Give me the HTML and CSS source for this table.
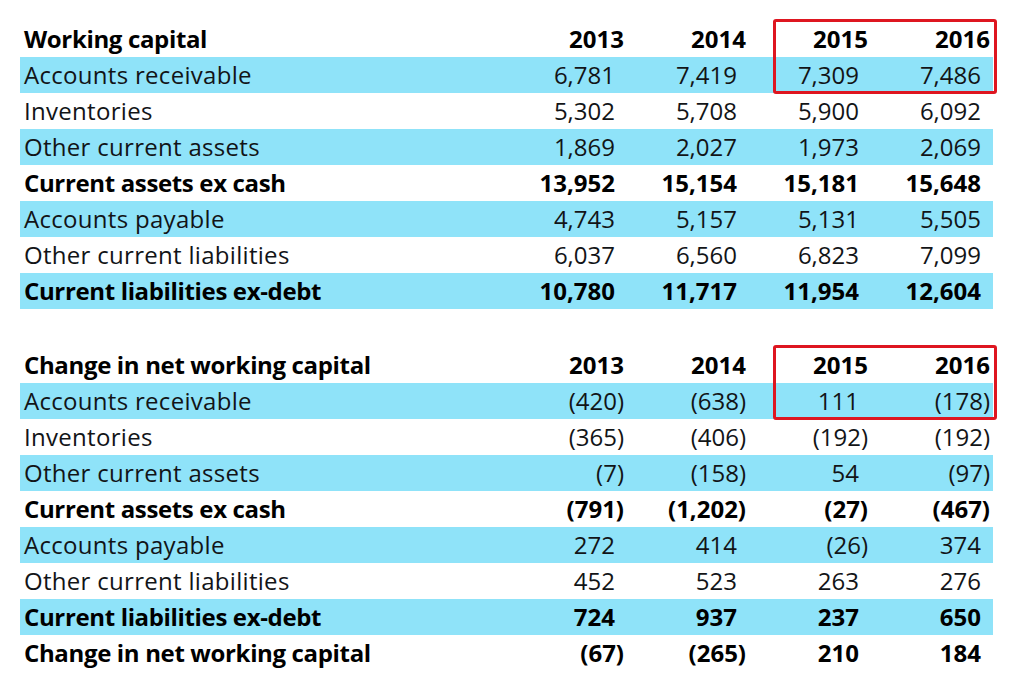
FILE: index.html
```html
<!DOCTYPE html>
<html>
<head>
<meta charset="utf-8">
<link rel="stylesheet" href="styles.css">
</head>
<body>
<div class="page">
  <section class="block">
    <div class="row head"><div class="lbl">Working capital</div><div class="c">2013</div><div class="c">2014</div><div class="c">2015</div><div class="c">2016</div></div>
    <div class="row blue"><div class="lbl">Accounts receivable</div><div class="c p">6,781</div><div class="c p">7,419</div><div class="c p">7,309</div><div class="c p">7,486</div></div>
    <div class="row"><div class="lbl">Inventories</div><div class="c p">5,302</div><div class="c p">5,708</div><div class="c p">5,900</div><div class="c p">6,092</div></div>
    <div class="row blue"><div class="lbl">Other current assets</div><div class="c p">1,869</div><div class="c p">2,027</div><div class="c p">1,973</div><div class="c p">2,069</div></div>
    <div class="row bold"><div class="lbl">Current assets ex cash</div><div class="c p">13,952</div><div class="c p">15,154</div><div class="c p">15,181</div><div class="c p">15,648</div></div>
    <div class="row blue"><div class="lbl">Accounts payable</div><div class="c p">4,743</div><div class="c p">5,157</div><div class="c p">5,131</div><div class="c p">5,505</div></div>
    <div class="row"><div class="lbl">Other current liabilities</div><div class="c p">6,037</div><div class="c p">6,560</div><div class="c p">6,823</div><div class="c p">7,099</div></div>
    <div class="row blue bold"><div class="lbl">Current liabilities ex-debt</div><div class="c p">10,780</div><div class="c p">11,717</div><div class="c p">11,954</div><div class="c p">12,604</div></div>
    <div class="highlight"></div>
  </section>

  <section class="block second">
    <div class="row head"><div class="lbl">Change in net working capital</div><div class="c">2013</div><div class="c">2014</div><div class="c">2015</div><div class="c">2016</div></div>
    <div class="row blue"><div class="lbl">Accounts receivable</div><div class="c">(420)</div><div class="c">(638)</div><div class="c p">111</div><div class="c">(178)</div></div>
    <div class="row"><div class="lbl">Inventories</div><div class="c">(365)</div><div class="c">(406)</div><div class="c">(192)</div><div class="c">(192)</div></div>
    <div class="row blue"><div class="lbl">Other current assets</div><div class="c">(7)</div><div class="c">(158)</div><div class="c p">54</div><div class="c">(97)</div></div>
    <div class="row bold"><div class="lbl">Current assets ex cash</div><div class="c">(791)</div><div class="c">(1,202)</div><div class="c">(27)</div><div class="c">(467)</div></div>
    <div class="row blue"><div class="lbl">Accounts payable</div><div class="c p">272</div><div class="c p">414</div><div class="c">(26)</div><div class="c p">374</div></div>
    <div class="row"><div class="lbl">Other current liabilities</div><div class="c p">452</div><div class="c p">523</div><div class="c p">263</div><div class="c p">276</div></div>
    <div class="row blue bold"><div class="lbl">Current liabilities ex-debt</div><div class="c p">724</div><div class="c p">937</div><div class="c p">237</div><div class="c p">650</div></div>
    <div class="row bold"><div class="lbl">Change in net working capital</div><div class="c">(67)</div><div class="c">(265)</div><div class="c p">210</div><div class="c p">184</div></div>
    <div class="highlight"></div>
  </section>
</div>
</body>
</html>
```
FILE: styles.css
```css
html, body {
  margin: 0;
  padding: 0;
  background: #ffffff;
}
body {
  font-family: "Open Sans", "Noto Sans", "Liberation Sans", sans-serif;
  color: #121417;
}
.page {
  padding: 21px 0 0 20px;
  width: 973px;
}
.block {
  position: relative;
}
.second {
  margin-top: 38px;
}
.row {
  display: grid;
  grid-template-columns: 485px repeat(4, 122px);
  height: 36px;
  line-height: 36px;
  font-size: 24px;
}
.row.blue {
  background: #8fe3f9;
}
.row.head,
.row.bold {
  font-weight: 700;
  color: #000;
}
.lbl {
  padding-left: 4px;
  white-space: nowrap;
  letter-spacing: 0.3px;
}
.row.head .lbl,
.row.bold .lbl {
  letter-spacing: -0.35px;
}
.c {
  text-align: right;
  padding-right: 3px;
  white-space: nowrap;
}
.c.p {
  padding-right: 12px;
}
.highlight {
  position: absolute;
  left: 753px;
  top: -2px;
  width: 218px;
  height: 69px;
  border: 3px solid #de1620;
  border-radius: 3px;
  pointer-events: none;
}
```
